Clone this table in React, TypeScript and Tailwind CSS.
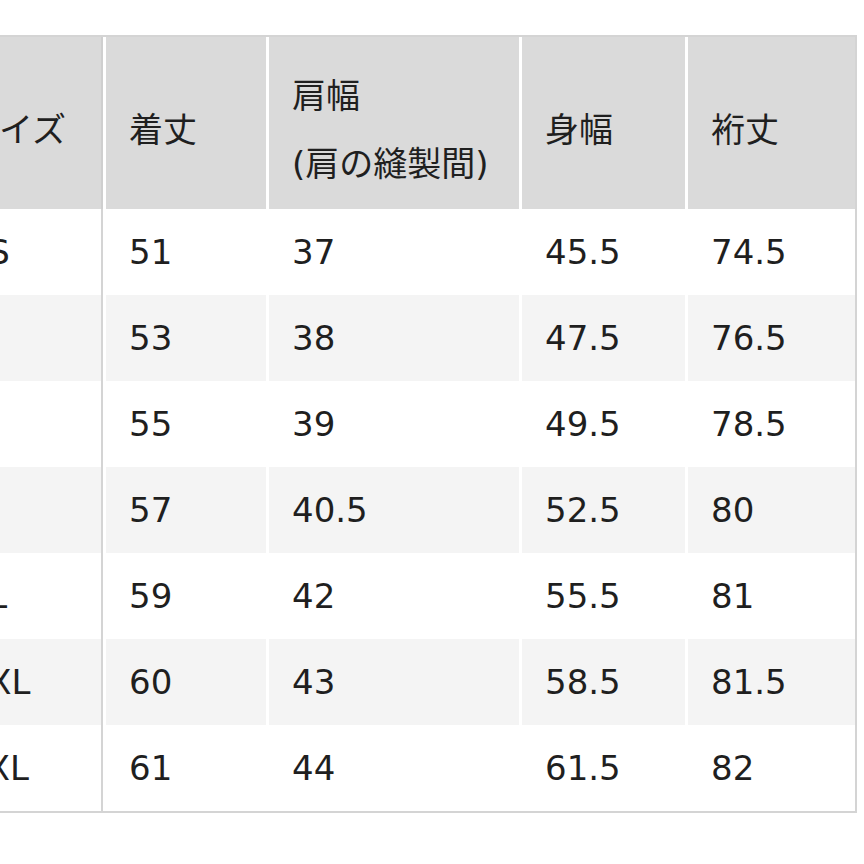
const header = [["サイズ"], ["着丈"], ["肩幅", "(肩の縫製間)"], ["身幅"], ["裄丈"]];

const rows = [
    ["XS", "51", "37", "45.5", "74.5"],
    ["S", "53", "38", "47.5", "76.5"],
    ["M", "55", "39", "49.5", "78.5"],
    ["L", "57", "40.5", "52.5", "80"],
    ["XL", "59", "42", "55.5", "81"],
    ["XXL", "60", "43", "58.5", "81.5"],
    ["3XL", "61", "44", "61.5", "82"],
];

const gridCols = "grid grid-cols-[164px_160px_250px_163px_167px] gap-x-[3px]";

export default function App() {
    return (
        <div
            className="w-[864px] h-[864px] overflow-hidden bg-white text-[#1f1f1f]"
            style={{ fontFamily: '"DejaVu Sans", "Noto Sans CJK JP", sans-serif' }}
        >
            <div className="mt-[35px] -ml-[63px] w-max border-2 border-[#d4d4d4] bg-white">
                {/* Header */}
                <div className={gridCols}>
                    {header.map((lines, i) => (
                        <div
                            key={i}
                            className={`h-[172px] bg-[#dadada] pt-[14px] flex flex-col justify-center text-[34px] leading-[68px] ${i === 0 ? "pl-[26px] border-r-2 border-[#cfcfcf]" : "pl-[23px]"}`}
                        >
                            {lines.map((l) => (
                                <span key={l} className="whitespace-nowrap">{l}</span>
                            ))}
                        </div>
                    ))}
                </div>

                {/* Body */}
                {rows.map((row, r) => (
                    <div key={r} className={gridCols}>
                        {row.map((cell, c) => (
                            <div
                                key={c}
                                className={`h-[86px] flex items-center text-[34px] ${r % 2 === 1 ? "bg-[#f4f4f4]" : "bg-white"} ${c === 0 ? "pl-[26px] border-r-2 border-[#d4d4d4]" : "pl-[23px]"}`}
                            >
                                {cell}
                            </div>
                        ))}
                    </div>
                ))}
            </div>
        </div>
    );
}
